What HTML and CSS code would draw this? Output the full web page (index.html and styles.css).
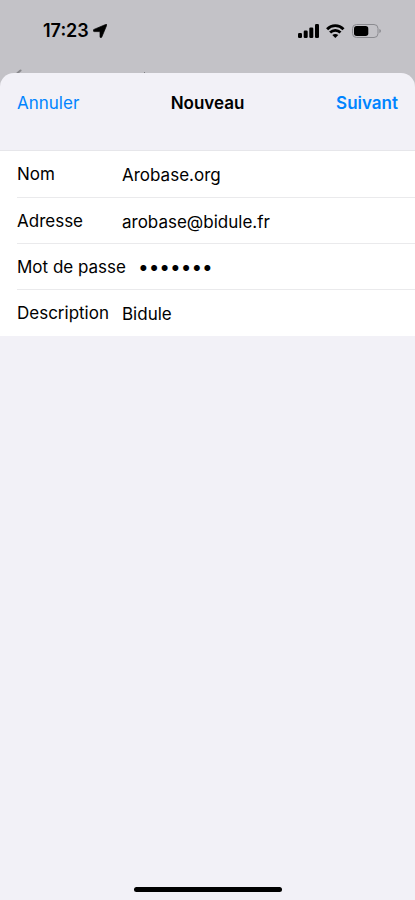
FILE: index.html
```html
<!DOCTYPE html>
<html lang="fr">
<head>
<meta charset="utf-8">
<meta name="viewport" content="width=device-width, initial-scale=1">
<title>Nouveau</title>
<link rel="stylesheet" href="styles.css">
</head>
<body>
<div class="status">
  <div class="clock">
    <span>17:23</span>
    <svg width="14" height="14" viewBox="0 0 14 14" aria-hidden="true"><path d="M12.600 .5Q14.300-.2 13.600 1.500L8.800 13Q8.500 13.700 7.800 13.700T7 12.800V8.500Q7 7.600 6.100 7.600H1.200Q.4 7.600.3 6.600T1 5.400Z" stroke="#000" stroke-width=".7"/></svg>
  </div>
  <div class="signals">
    <svg width="21" height="14" viewBox="0 0 21 14" aria-hidden="true"><rect x="0" y="9" width="4" height="5" rx="1.200"/><rect x="5.700" y="6.500" width="4" height="7.500" rx="1.200"/><rect x="11.300" y="3.500" width="4" height="10.500" rx="1.200"/><rect x="17" y="0" width="4" height="14" rx="1.200"/></svg>
    <svg width="19" height="14" viewBox="0 0 19 14" aria-hidden="true"><g fill="none" stroke="#000" stroke-width="2.800"><path d="M1.100 5.200Q4.500 1.700 9.300 1.700T17.500 5.200"/><path d="M4.100 8.500Q6.300 6.300 9.300 6.300T14.500 8.500"/></g><path d="M6.300 10.900Q9.300 8.900 12.300 10.900L9.300 13.900Z"/></svg>
    <svg width="29" height="14" viewBox="0 0 29 14" aria-hidden="true"><rect x=".5" y=".5" width="25.500" height="13" rx="4" fill="none" stroke="#8b8b90"/><rect x="2" y="2" width="14.300" height="10" rx="2.700"/><path d="M27.300 5Q29 5.500 29 7T27.300 9Z" fill="#8b8b90"/></svg>
  </div>
  <svg class="behind" width="150" height="4" viewBox="0 0 150 4" aria-hidden="true"><path d="M17.500 4L20.500 1.500" fill="none" stroke="#88888c" stroke-width="2" stroke-linecap="round"/><path d="M144 3h1v1h-1z" fill="#808085"/></svg>
</div>
<main class="sheet">
  <header class="bar">
    <button class="action" type="button">Annuler</button>
    <h1 class="title">Nouveau</h1>
    <button class="action next" type="submit" form="account">Suivant</button>
  </header>
  <form class="fields" id="account">
    <div class="row"><label for="name">Nom</label><input id="name" type="text" value="Arobase.org"></div>
    <div class="row"><label for="email">Adresse</label><input id="email" type="email" value="arobase@bidule.fr"></div>
    <div class="row"><label for="password">Mot de passe</label><input id="password" class="secret" type="password" value="bidules"></div>
    <div class="row"><label for="description">Description</label><input id="description" type="text" value="Bidule"></div>
  </form>
  <div class="home"></div>
</main>
</body>
</html>
```
FILE: styles.css
```css
* {
  box-sizing: border-box;
}

body {
  margin: 0;
  min-height: 100vh;
  display: flex;
  flex-direction: column;
  background: #c3c2c7;
  color: #000;
  font: 17px/24px Inter, "Liberation Sans", sans-serif;
}

svg {
  display: block;
}

.status {
  position: relative;
  display: flex;
  justify-content: space-between;
  padding: 19px 34px 30px 43px;
}

.clock,
.signals {
  display: flex;
  align-items: center;
}

.clock {
  gap: 4px;
  font-size: 18px;
  font-weight: 600;
}

.signals {
  gap: 7px;
}

.behind {
  position: absolute;
  left: 0;
  bottom: 0;
}

.sheet {
  flex: 1;
  display: flex;
  flex-direction: column;
  background: #f2f1f7;
  border-radius: 14px 14px 0 0;
}

.bar {
  display: grid;
  grid-template-columns: 1fr auto 1fr;
  align-items: center;
  padding: 18px 17px 35px;
}

.title {
  margin: 0;
  font-size: 17px;
  line-height: 24px;
  font-weight: 600;
}

.action {
  justify-self: start;
  padding: 0;
  border: 0;
  background: none;
  color: #0084ff;
  font: inherit;
}

.next {
  justify-self: end;
  font-weight: 600;
}

.fields {
  background: #fff;
  border-top: 1px solid #e6e6ea;
  padding: 0 0 1px 17px;
}

.row {
  display: flex;
  align-items: center;
  gap: 12px;
  height: 46px;
}

.row + .row {
  border-top: 1px solid #eaeaec;
}

.row label {
  min-width: 93px;
}

.row input {
  flex: 1;
  min-width: 0;
  padding: 2px 0 0;
  border: 0;
  outline: 0;
  background: none;
  color: #000;
  font: inherit;
}

.row .secret {
  font-size: 19px;
}

.home {
  width: 148px;
  height: 5px;
  margin: auto auto 8px;
  border-radius: 3px;
  background: #000;
}
```
